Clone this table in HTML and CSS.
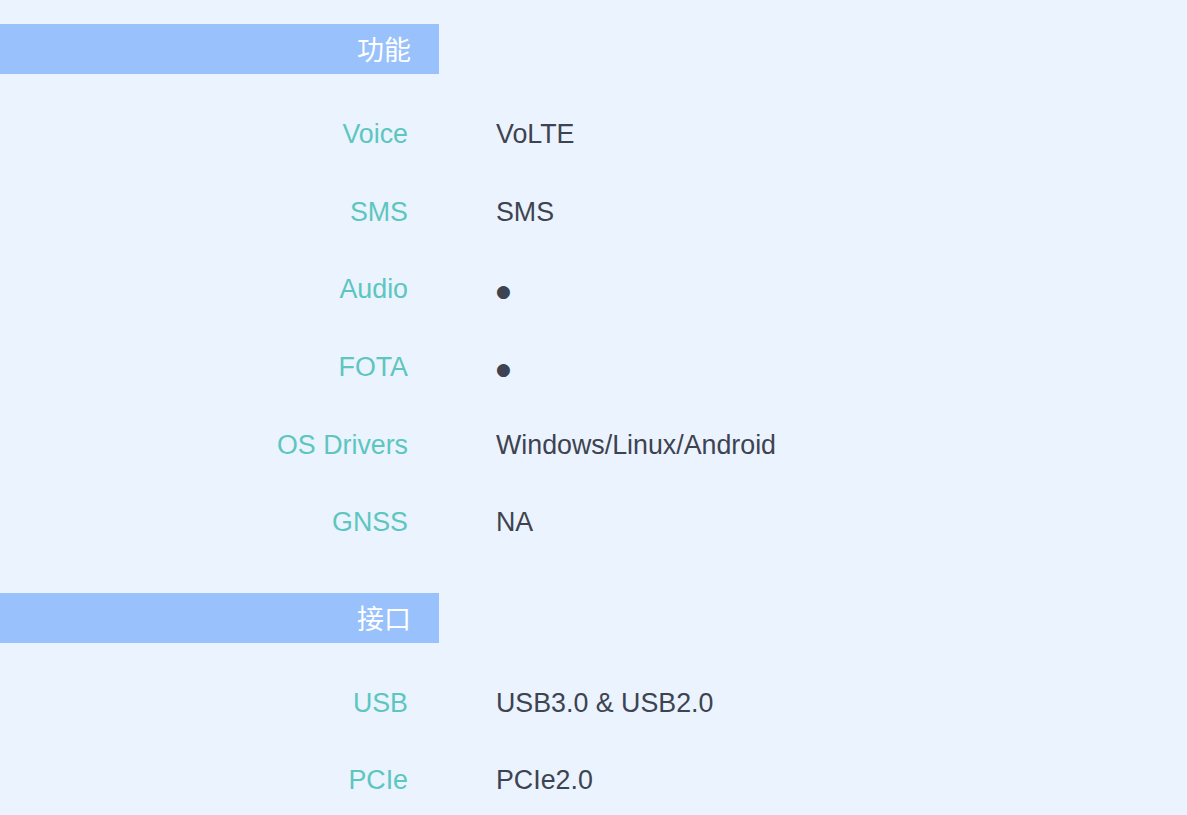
FILE: index.html
```html
<!DOCTYPE html>
<html lang="zh">
<head>
<meta charset="utf-8">
<title>规格</title>
<link rel="stylesheet" href="styles.css">
</head>
<body>
<div class="page">
  <section class="section">
    <h2 class="section-title">功能</h2>
    <div class="row"><div class="label">Voice</div><div class="value">VoLTE</div></div>
    <div class="row"><div class="label">SMS</div><div class="value">SMS</div></div>
    <div class="row"><div class="label">Audio</div><div class="value"><span class="dot">●</span></div></div>
    <div class="row"><div class="label">FOTA</div><div class="value"><span class="dot">●</span></div></div>
    <div class="row"><div class="label">OS Drivers</div><div class="value">Windows/Linux/Android</div></div>
    <div class="row"><div class="label">GNSS</div><div class="value">NA</div></div>
  </section>
  <section class="section">
    <h2 class="section-title">接口</h2>
    <div class="row"><div class="label">USB</div><div class="value">USB3.0 &amp; USB2.0</div></div>
    <div class="row"><div class="label">PCIe</div><div class="value">PCIe2.0</div></div>
  </section>
</div>
</body>
</html>
```

FILE: styles.css
```css
html, body {
  margin: 0;
  padding: 0;
  background: #ebf3fe;
}
body {
  font-family: "Liberation Sans", Arial, "Noto Sans CJK SC", sans-serif;
  font-size: 26.8px;
  overflow: hidden;
}
.page {
  padding-top: 24px;
}
.section {
  margin-bottom: 31px;
}
.section-title {
  width: 439px;
  height: 50px;
  box-sizing: border-box;
  margin: 0 0 22px 0;
  padding-right: 28px;
  background: #99c1fb;
  color: #ffffff;
  font-family: "Noto Sans CJK SC", sans-serif;
  font-size: 27px;
  font-weight: 400;
  line-height: 49px;
  text-align: right;
}
.row {
  display: flex;
  align-items: center;
  height: 77.6px;
}
.label {
  width: 408px;
  text-align: right;
  color: #5cc6bf;
}
.value {
  margin-left: 88px;
  color: #3d4350;
}
.dot {
  font-family: "DejaVu Sans", sans-serif;
  font-size: 17px;
  position: relative;
  top: -1px;
}
```
